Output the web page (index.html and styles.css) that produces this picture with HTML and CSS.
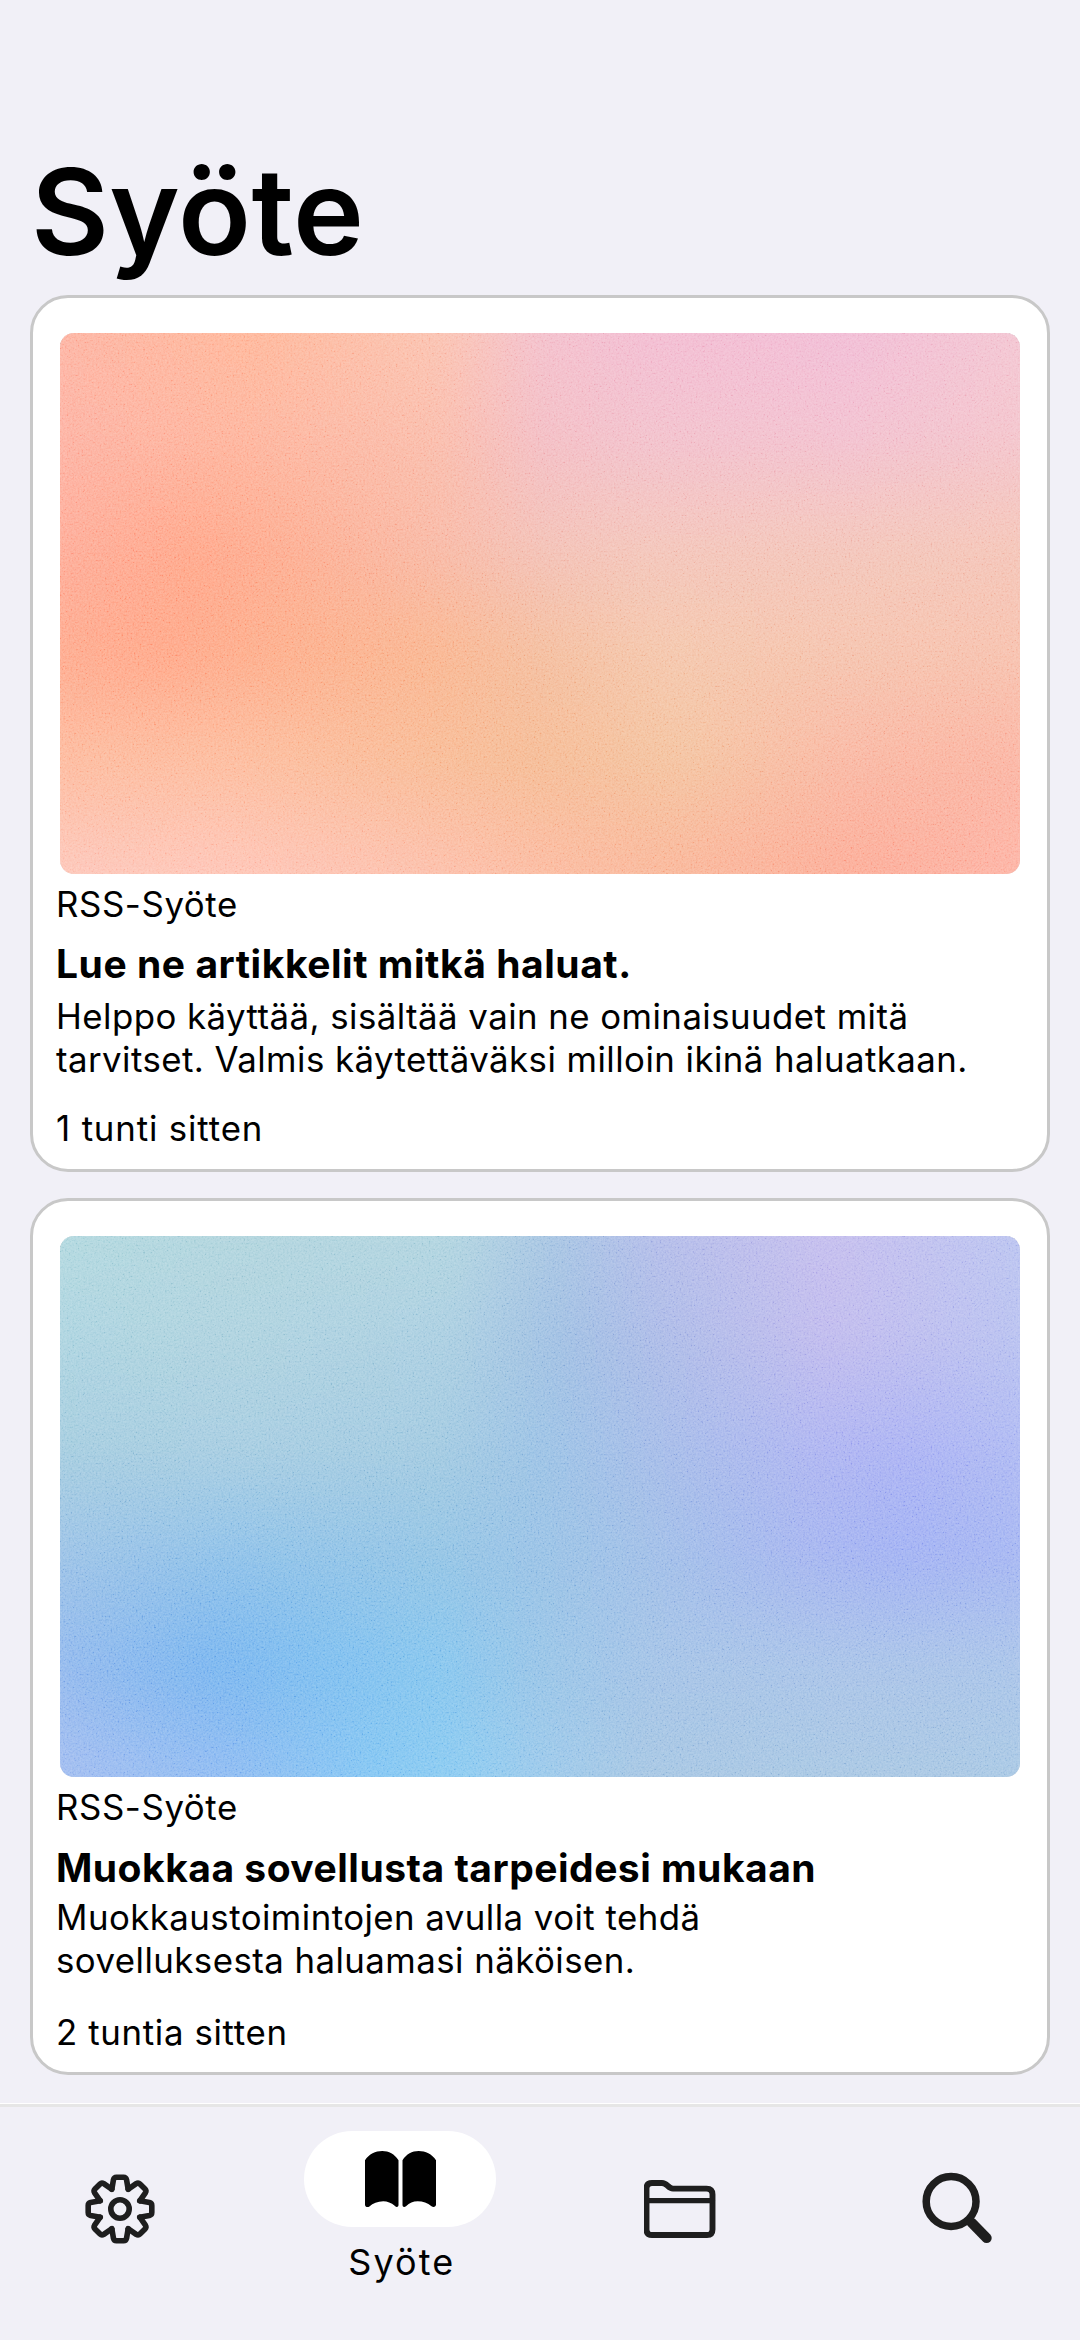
FILE: index.html
```
<!DOCTYPE html>
<html lang="fi">
<head>
<meta charset="utf-8">
<meta name="viewport" content="width=1080">
<title>Syöte</title>
<link rel="stylesheet" href="styles.css">
</head>
<body>
<div class="screen">
  <header class="header">
    <h1 class="header-title">Syöte</h1>
  </header>

  <main class="feed">
    <article class="card">
      <div class="cover cover-warm">
        <div class="mesh"><i class="band band-1"></i><i class="band band-2"></i><i class="band band-3"></i><i class="band band-4"></i><i class="band band-5"></i><i class="band band-6"></i></div>
        <svg class="grain" width="960" height="541" aria-hidden="true">
          <filter id="grain" x="0" y="0" width="100%" height="100%">
            <feTurbulence type="fractalNoise" baseFrequency="0.55" numOctaves="2" seed="4" result="n"/>
            <feColorMatrix in="n" type="matrix" values="1.6 0 0 0 -0.32  1.6 0 0 0 -0.32  1.6 0 0 0 -0.32  0 0 0 0 1"/>
          </filter>
          <rect width="960" height="541" filter="url(#grain)"/>
        </svg>
      </div>
      <p class="source">RSS-Syöte</p>
      <h2 class="title">Lue ne artikkelit mitkä haluat.</h2>
      <p class="summary">Helppo käyttää, sisältää vain ne ominaisuudet mitä<br>tarvitset. Valmis käytettäväksi milloin ikinä haluatkaan.</p>
      <p class="time">1 tunti sitten</p>
    </article>

    <article class="card card-compact">
      <div class="cover cover-cool">
        <div class="mesh"><i class="band band-1"></i><i class="band band-2"></i><i class="band band-3"></i><i class="band band-4"></i><i class="band band-5"></i><i class="band band-6"></i></div>
        <svg class="grain" width="960" height="541" aria-hidden="true"><rect width="960" height="541" filter="url(#grain)"/></svg>
      </div>
      <p class="source">RSS-Syöte</p>
      <h2 class="title">Muokkaa sovellusta tarpeidesi mukaan</h2>
      <p class="summary">Muokkaustoimintojen avulla voit tehdä<br>sovelluksesta haluamasi näköisen.</p>
      <p class="time">2 tuntia sitten</p>
    </article>
  </main>

  <nav class="tabs">
    <a class="tab">
      <svg class="icon" width="72" height="72" viewBox="-35 -36 72 72" stroke-width="5.6">
        <defs><path id="tooth" d="M-8.2-19.8L-6.5-29.4Q-5.9-31.8-3.6-31.8H3.6Q5.9-31.8 6.5-29.4L8.2-19.8"/></defs>
        <use href="#tooth"/>
        <use href="#tooth" transform="rotate(45)"/>
        <use href="#tooth" transform="rotate(90)"/>
        <use href="#tooth" transform="rotate(135)"/>
        <use href="#tooth" transform="rotate(180)"/>
        <use href="#tooth" transform="rotate(225)"/>
        <use href="#tooth" transform="rotate(270)"/>
        <use href="#tooth" transform="rotate(315)"/>
        <circle r="9.2"/>
      </svg>
    </a>
    <a class="tab tab-active">
      <span class="pill">
        <svg width="71" height="56" viewBox="0 0 71 56">
          <path d="M0 9.3C4 3 10.5 0 17.2 0S29.5 3 33.5 9.3V54C33.5 56.2 31.2 56.4 30 55C26 51.8 22.5 50.3 18.2 50.3C12.5 50.3 8 52.5 4.4 55.4C2.6 56.6 0 56 0 53.4Z"/>
          <path d="M37.5 9.3C41.5 3 47 0 53.7 0S67 3 71 9.3V53.5C71 56.1 68.2 56.5 66.5 55.2C62.5 51.8 58 50.3 52.7 50.3C48 50.3 44.5 52 41 55.2C39.3 56.5 37.5 56 37.5 54Z"/>
        </svg>
      </span>
      <span class="tab-label">Syöte</span>
    </a>
    <a class="tab">
      <svg class="icon" width="72" height="58" viewBox="0.5 0 72 58" stroke-width="5.9">
        <path d="M3 8.5Q3 3 8.5 3H18.5C21 3 22.5 4.2 24 5.7S27 8.6 29.5 8.6H63Q69 8.6 69 14.5V49.5Q69 55 63.5 55H8.5Q3 55 3 49.5Z"/>
        <path d="M3 20.7H69" stroke-width="5.2"/>
      </svg>
    </a>
    <a class="tab">
      <svg class="icon" width="76" height="76" viewBox="-35.5 -38 76 76">
        <circle cx="-5.4" cy="-7.5" r="24.9" stroke-width="7.5"/>
        <path d="M15 13.5L30.1 29" stroke-width="10.2"/>
      </svg>
    </a>
  </nav>
</div>
</body>
</html>
```
FILE: styles.css
```
* { box-sizing: border-box; }

body {
  margin: 0;
  background: #f1f0f7;
  color: #000;
  font-family: Inter, "Liberation Sans", sans-serif;
}

h1, h2, p { margin: 0; }

.screen {
  width: 1080px;
  height: 2340px;
  display: flex;
  flex-direction: column;
  overflow: hidden;
}

/* Header */
.header {
  height: 295px;
  padding: 139px 30px 0 31px;
}
.header-title {
  font-size: 120px;
  line-height: 145px;
  font-weight: 600;
  letter-spacing: 0.3px;
}

/* Feed */
.feed {
  flex: 1;
  display: flex;
  flex-direction: column;
  gap: 26px;
  padding: 0 30px;
}
.card {
  height: 877px;
  padding: 35px 22px 0 23px;
  background: #fff;
  border: 3px solid #c8c8c8;
  border-radius: 38px;
}
.source, .time {
  font-size: 34.8px;
  line-height: 43px;
  letter-spacing: 0.7px;
  white-space: nowrap;
}
.source { margin-top: 9px; letter-spacing: 0.6px; }
.title {
  margin-top: 14px;
  font-size: 39px;
  line-height: 47px;
  font-weight: 700;
  letter-spacing: 0.55px;
  white-space: nowrap;
}
.summary {
  margin-top: 8px;
  font-size: 34.8px;
  line-height: 43px;
  letter-spacing: 0.45px;
  white-space: nowrap;
}
.time { margin-top: 26px; letter-spacing: 0.85px; }
.card-compact .title { margin-top: 15px; letter-spacing: 0.5px; }
.card-compact .summary { margin-top: 5px; }
.card-compact .time { margin-top: 29px; letter-spacing: 0.65px; }

/* Covers: six horizontal colour bands cross-faded from top to bottom */
.cover {
  display: grid;
  width: 960px;
  height: 541px;
  margin-left: 4px;
  border-radius: 14px;
  overflow: hidden;
  isolation: isolate;
}
.mesh, .grain { grid-area: 1 / 1; }
.mesh {
  display: grid;
  margin: -32px;
  filter: blur(16px);
}
.band { grid-area: 1 / 1; }
.grain {
  display: block;
  mix-blend-mode: soft-light;
  opacity: 0.42;
}
.band-2 { mask-image: linear-gradient(transparent 0%, #000 22%); }
.band-3 { mask-image: linear-gradient(transparent 22%, #000 41%); }
.band-4 { mask-image: linear-gradient(transparent 41%, #000 58%); }
.band-5 { mask-image: linear-gradient(transparent 58%, #000 76%); }
.band-6 { mask-image: linear-gradient(transparent 76%, #000 94%); }

.cover-warm .band-1 { background: linear-gradient(90deg, #fdb2a2 0%, #ffb697 22%, #fbc3b0 40%, #f3bfcd 50%, #f3bad2 60%, #f1bad6 80%, #f3c6d2 100%); }
.cover-warm .band-2 { background: linear-gradient(90deg, #fdb0a2 0%, #feb39b 20%, #fabba9 40%, #f3bcc3 50%, #f2bfcb 60%, #f2bfcf 80%, #f3c3ca 100%); }
.cover-warm .band-3 { background: linear-gradient(90deg, #feab99 0%, #ffa588 16%, #fdac90 26%, #f8b7a3 40%, #f3bfb4 50%, #f3c3b8 60%, #f3c4b8 80%, #f4c3b5 100%); }
.cover-warm .band-4 { background: linear-gradient(90deg, #fea98d 0%, #ffa586 13%, #fdac89 24%, #f9b48e 40%, #f4bc9c 50%, #f4c5aa 62%, #f5c2ac 80%, #f7bfac 100%); }
.cover-warm .band-5 { background: linear-gradient(90deg, #fdb99c 0%, #fdbb9c 20%, #f8ba94 40%, #f5ba93 50%, #f4c29e 64%, #f9b6a1 80%, #fab39f 90%, #fbb3a2 100%); }
.cover-warm .band-6 { background: linear-gradient(90deg, #fdc5b8 0%, #fec3b4 20%, #fcbda8 40%, #fbb99e 50%, #f9b597 62%, #fcaa96 82%, #fdb3a5 100%); }

.cover-cool .band-1 { background: linear-gradient(90deg, #b1d9de 0%, #b0d4dc 20%, #b1d5de 41%, #a6c3e2 52%, #b3bbe9 61%, #c4bced 78%, #b8c4f0 100%); }
.cover-cool .band-2 { background: linear-gradient(90deg, #abd3df 0%, #acd1de 20%, #a8cde0 41%, #9dbde2 52%, #a9b9e6 61%, #bfb9ed 78%, #b5c0f0 100%); }
.cover-cool .band-3 { background: linear-gradient(90deg, #a2cbde 0%, #a4cbe0 20%, #9fc8e0 40%, #98c0e4 50%, #a2bae7 61%, #acb2f1 78%, #a8b0f3 86%, #adb9f2 100%); }
.cover-cool .band-4 { background: linear-gradient(90deg, #9bc0e5 0%, #8bbfe8 20%, #90c2e4 40%, #96c0e5 50%, #9dbde6 60%, #a3b3ef 76%, #9faff3 85%, #a4b5f1 100%); }
.cover-cool .band-5 { background: linear-gradient(90deg, #94b7ec 0%, #76b3ef 18%, #7abcef 29%, #83c4ee 40%, #95c2e6 50%, #a2c1e6 62%, #a6c1e7 80%, #a7c2e8 100%); }
.cover-cool .band-6 { background: linear-gradient(90deg, #a3bbef 0%, #8bb9f1 20%, #80c4f2 34%, #88c9f0 42%, #98c7ea 50%, #a3c4e2 60%, #a6c5e2 80%, #a6c6e3 100%); }

/* Tab bar */
.tabs {
  flex: none;
  height: 236px;
  margin-top: 1px;
  padding-bottom: 29px;
  display: grid;
  grid-template-columns: repeat(4, 279.4px);
  justify-content: center;
  border-top: 3px solid #e6e6e6;
  box-shadow: 0 -1px 0 #fff;
}
.tab {
  display: flex;
  align-items: center;
  justify-content: center;
}
.tab-active {
  flex-direction: column;
  justify-content: flex-start;
  padding-top: 24px;
}
.pill {
  flex: none;
  width: 192px;
  height: 96px;
  border-radius: 48px;
  background: #fff;
  display: flex;
  align-items: center;
  justify-content: center;
}
.tab-label {
  margin: 13px 0 0 3px;
  font-size: 36px;
  line-height: 44px;
  letter-spacing: 2.1px;
}
.icon {
  display: block;
  fill: none;
  stroke: #1e1e1e;
  stroke-linecap: round;
  stroke-linejoin: round;
}
```
